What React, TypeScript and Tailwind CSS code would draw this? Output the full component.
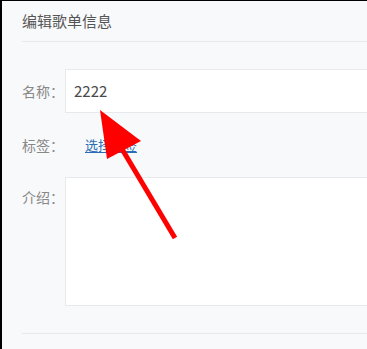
export default function App() {
  const font = { fontFamily: '"Noto Sans CJK SC", "Liberation Sans", sans-serif' };
  return (
    <div
      className="relative w-[367px] h-[349px] overflow-hidden bg-[#f8f9fb] border-l-2 border-t border-black"
      style={font}
    >
      <div className="pl-5">
        {/* header */}
        <div className="h-[41px] flex items-center border-b border-[#e6e8eb] text-[15px] text-[#555]">
          编辑歌单信息
        </div>

        {/* form */}
        <div className="pt-[27px]">
          <div className="flex items-center h-[44px]">
            <div className="w-[43px] shrink-0 text-[14px] text-[#888]">名称：</div>
            <div className="flex-1 h-full bg-white border border-[#e8e9ec] flex items-center pl-2 text-[15px] text-[#4a4a4a] min-w-[400px]">
              2222
            </div>
          </div>

          <div className="flex items-center h-[64px]">
            <div className="w-[43px] shrink-0 text-[14px] text-[#888]">标签：</div>
            <a className="ml-5 text-[13px] text-[#2d6cb4] underline underline-offset-2">选择标签</a>
          </div>

          <div className="flex items-start h-[129px]">
            <div className="w-[43px] shrink-0 pt-[10px] text-[14px] text-[#888]">介绍：</div>
            <div className="flex-1 h-full bg-white border border-[#e8e9ec] min-w-[400px]" />
          </div>
        </div>

        <div className="mt-[27px] border-b border-[#e6e8eb]" />
      </div>

      {/* red annotation arrow */}
      <svg className="absolute left-0 top-0 pointer-events-none" width="367" height="349" viewBox="0 0 367 349">
        <line x1="117" y1="143" x2="173" y2="237" stroke="#ff0000" strokeWidth="5" />
        <polygon points="98,109 105,158 139,140" fill="#ff0000" />
      </svg>
    </div>
  );
}
